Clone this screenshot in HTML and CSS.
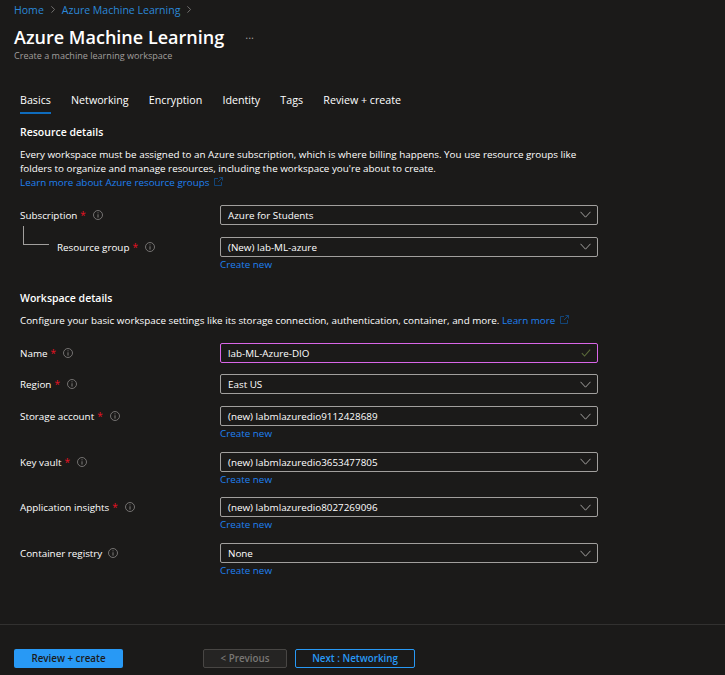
FILE: index.html
```html
<!DOCTYPE html>
<html>
<head>
    <meta charset="UTF-8">
    <title>Azure Machine Learning</title>
    <link rel="stylesheet" href="styles.css">
</head>
<body>
    <svg class="svg-defs" width="0" height="0">
        <symbol id="info" viewBox="0 0 10 10">
            <circle cx="5" cy="5" r="4.5" fill="none" stroke="currentColor" stroke-width="0.8"/>
            <path d="M5 4.3V7.6M5 2.4V3.3" fill="none" stroke="currentColor" stroke-width="0.9"/>
        </symbol>
        <symbol id="chevron" viewBox="0 0 11 7">
            <path d="M0.5 0.8L5.5 6.2L10.5 0.8" fill="none" stroke="currentColor" stroke-width="1"/>
        </symbol>
        <symbol id="crumb" viewBox="0 0 4 7">
            <path d="M0.4 0.3L3.6 3.5L0.4 6.7" fill="none" stroke="currentColor" stroke-width="0.8"/>
        </symbol>
        <symbol id="external" viewBox="0 0 9 9">
            <path d="M4 1.5H0.5V8.5H7.5V5M4 5L8.5 0.5M5.5 0.5H8.5V3.5" fill="none" stroke="currentColor" stroke-width="0.8"/>
        </symbol>
    </svg>

    <div class="page">
        <div class="breadcrumb">
            <a class="link-crumb">Home</a>
            <svg class="crumb-sep"><use href="#crumb"/></svg>
            <a class="link-crumb">Azure Machine Learning</a>
            <svg class="crumb-sep"><use href="#crumb"/></svg>
        </div>
        <div class="title-row">
            <h1 class="title">Azure Machine Learning</h1>
            <span class="more">...</span>
        </div>
        <div class="subtitle">Create a machine learning workspace</div>

        <div class="tabs">
            <span class="tab tab-active">Basics</span>
            <span class="tab">Networking</span>
            <span class="tab">Encryption</span>
            <span class="tab">Identity</span>
            <span class="tab">Tags</span>
            <span class="tab">Review + create</span>
        </div>

        <div class="content">
            <h2 class="section-title">Resource details</h2>
            <p class="section-text">
                Every workspace must be assigned to an Azure subscription, which is where billing happens. You use resource groups like folders to organize and manage resources, including the workspace you're about to create.<br>
                <a class="link">Learn more about Azure resource groups <svg class="external"><use href="#external"/></svg></a>
            </p>

            <div class="fields fields-resource">
                <div class="field">
                    <div class="field-label">
                        <span>Subscription</span><span class="required">*</span>
                        <svg class="info"><use href="#info"/></svg>
                    </div>
                    <div class="control">
                        <div class="select"><span>Azure for Students</span><svg class="chevron"><use href="#chevron"/></svg></div>
                    </div>
                </div>
                <div class="field">
                    <div class="field-label field-label-nested">
                        <span class="tree-line"></span>
                        <span>Resource group</span><span class="required">*</span>
                        <svg class="info"><use href="#info"/></svg>
                    </div>
                    <div class="control">
                        <div class="select"><span>(New) lab-ML-azure</span><svg class="chevron"><use href="#chevron"/></svg></div>
                        <a class="link create-new">Create new</a>
                    </div>
                </div>
            </div>

            <h2 class="section-title section-workspace">Workspace details</h2>
            <p class="section-text">
                Configure your basic workspace settings like its storage connection, authentication, container, and more. <a class="link">Learn more <svg class="external"><use href="#external"/></svg></a>
            </p>

            <div class="fields fields-workspace">
                <div class="field">
                    <div class="field-label">
                        <span>Name</span><span class="required">*</span>
                        <svg class="info"><use href="#info"/></svg>
                    </div>
                    <div class="control">
                        <div class="select select-focus">
                            <span>lab-ML-Azure-DIO</span>
                            <svg class="check" viewBox="0 0 12 10"><path d="M0.8 5.2L4.2 8.8L11.2 0.8" fill="none" stroke="currentColor" stroke-width="1.3"/></svg>
                        </div>
                    </div>
                </div>
                <div class="field">
                    <div class="field-label">
                        <span>Region</span><span class="required">*</span>
                        <svg class="info"><use href="#info"/></svg>
                    </div>
                    <div class="control">
                        <div class="select"><span>East US</span><svg class="chevron"><use href="#chevron"/></svg></div>
                    </div>
                </div>
                <div class="field">
                    <div class="field-label">
                        <span>Storage account</span><span class="required">*</span>
                        <svg class="info"><use href="#info"/></svg>
                    </div>
                    <div class="control">
                        <div class="select"><span>(new) labmlazuredio9112428689</span><svg class="chevron"><use href="#chevron"/></svg></div>
                        <a class="link create-new">Create new</a>
                    </div>
                </div>
                <div class="field">
                    <div class="field-label">
                        <span>Key vault</span><span class="required">*</span>
                        <svg class="info"><use href="#info"/></svg>
                    </div>
                    <div class="control">
                        <div class="select"><span>(new) labmlazuredio3653477805</span><svg class="chevron"><use href="#chevron"/></svg></div>
                        <a class="link create-new">Create new</a>
                    </div>
                </div>
                <div class="field">
                    <div class="field-label">
                        <span>Application insights</span><span class="required">*</span>
                        <svg class="info"><use href="#info"/></svg>
                    </div>
                    <div class="control">
                        <div class="select"><span>(new) labmlazuredio8027269096</span><svg class="chevron"><use href="#chevron"/></svg></div>
                        <a class="link create-new">Create new</a>
                    </div>
                </div>
                <div class="field">
                    <div class="field-label">
                        <span>Container registry</span>
                        <svg class="info info-no-star"><use href="#info"/></svg>
                    </div>
                    <div class="control">
                        <div class="select"><span>None</span><svg class="chevron"><use href="#chevron"/></svg></div>
                        <a class="link create-new">Create new</a>
                    </div>
                </div>
            </div>
        </div>

        <div class="footer">
            <button class="btn btn-primary">Review + create</button>
            <button class="btn btn-disabled">&lt; Previous</button>
            <button class="btn btn-outline">Next : Networking</button>
        </div>
    </div>
</body>
</html>
```

FILE: styles.css
```css
body {
    margin: 0;
    background: #1b1a19;
    color: #fff;
    font-family: "Open Sans", "Noto Sans", sans-serif;
    font-size: 9.85px;
}

.svg-defs {
    display: block;
    height: 0;
}

.page {
    display: flex;
    flex-direction: column;
    height: 675px;
    overflow: hidden;
}

.breadcrumb {
    display: flex;
    align-items: center;
    gap: 7px;
    height: 19px;
    padding-left: 14px;
    font-size: 10.55px;
}

.link-crumb {
    color: #2b88d8;
}

.crumb-sep {
    width: 4px;
    height: 7px;
    color: #8a8886;
}

.title-row {
    display: flex;
    align-items: center;
    height: 36px;
    padding-left: 14px;
}

.title {
    margin: 0;
    font-size: 18.05px;
    font-weight: 600;
}

.more {
    margin: 0 0 6px 21px;
    color: #a19f9d;
    font-size: 11px;
    line-height: 1;
}

.subtitle {
    margin-top: -5px;
    padding-left: 14px;
    color: #a19f9d;
    font-size: 9.07px;
    line-height: 12px;
}

.tabs {
    display: flex;
    gap: 20.2px;
    height: 25px;
    margin-top: 27px;
    padding-left: 20px;
}

.tab {
    box-sizing: border-box;
    height: 25px;
    font-size: 10.7px;
    line-height: 22px;
}

.tab-active {
    border-bottom: 2px solid #0f6cbd;
}

.content {
    flex: 1;
    padding: 4px 20px 0;
}

.section-title {
    margin: 6px 0 0;
    font-size: 10.5px;
    font-weight: 600;
    line-height: 16px;
}

.section-workspace {
    margin-top: 19px;
}

.section-text {
    width: 570px;
    margin: 7px 0 0;
    line-height: 14px;
}

.link {
    color: #1f80f0;
}

.external {
    width: 9px;
    height: 9px;
    margin-left: 2px;
    color: #12508f;
}

.fields-resource {
    margin-top: 15.5px;
}

.fields-resource .field {
    margin-bottom: 12px;
}

.fields-workspace {
    margin-top: 16.2px;
}

.field {
    display: flex;
    margin-bottom: 11.7px;
}

.field-label {
    display: flex;
    align-items: center;
    flex-shrink: 0;
    width: 200px;
    height: 20px;
}

.field-label-nested {
    position: relative;
    box-sizing: border-box;
    padding-left: 37px;
}

.tree-line {
    position: absolute;
    left: 3px;
    top: -11px;
    width: 25px;
    height: 18px;
    border-left: 1px solid #a19f9d;
    border-bottom: 1px solid #a19f9d;
}

.required {
    margin-left: 3px;
    color: #e81123;
    font-size: 10px;
}

.info {
    width: 10px;
    height: 10px;
    margin-left: 7px;
    color: #8a8886;
}

.info-no-star {
    margin-left: 6px;
}

.control {
    width: 378px;
}

.select {
    display: flex;
    align-items: center;
    justify-content: space-between;
    box-sizing: border-box;
    height: 20px;
    padding: 0 6px 0 7px;
    border: 1px solid #a19f9d;
    border-radius: 2px;
}

.select-focus {
    border-color: #d966e8;
}

.chevron {
    width: 11px;
    height: 7px;
    color: #a19f9d;
}

.check {
    width: 10px;
    height: 8px;
    color: #5b6b3a;
}

.create-new {
    display: block;
    height: 14px;
    line-height: 14px;
}

.footer {
    display: flex;
    align-items: flex-start;
    height: 26px;
    padding: 24px 0 0 14px;
    border-top: 1px solid #323130;
}

.btn {
    height: 19px;
    padding: 0;
    border-radius: 2px;
    font-family: inherit;
    font-size: 9.8px;
    font-weight: 600;
}

.btn-primary {
    width: 109px;
    border: none;
    background: #2899f5;
    color: #1b1a19;
}

.btn-disabled {
    width: 84px;
    margin-left: 80px;
    border: 1px solid #484644;
    background: #252423;
    color: #797775;
}

.btn-outline {
    width: 120px;
    margin-left: 8px;
    border: 1px solid #2899f5;
    background: transparent;
    color: #2899f5;
}
```
